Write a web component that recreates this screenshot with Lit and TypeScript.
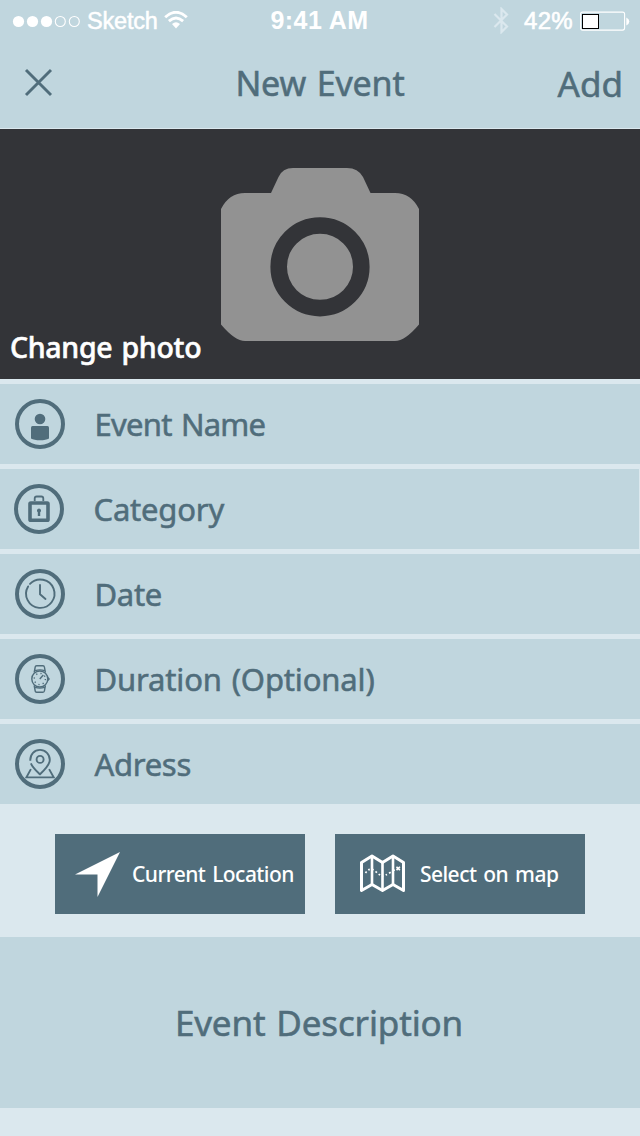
import { LitElement, html, css, svg } from "lit";
import { customElement } from "lit/decorators.js";

const fieldIcons = {
  person: svg`
    <circle cx="25" cy="20" r="5.3" fill="currentColor"/>
    <path d="M16 28.500q0-1.500 1.500-1.500h15q1.500 0 1.500 1.500V39.500q-3 1.800-9 1.800T16 39.500z" fill="currentColor"/>`,
  lock: svg`
    <path d="M20.700 17v-2.500q0-2 2-2h4.600q2 0 2 2V17" fill="none" stroke="currentColor" stroke-width="1.800"/>
    <rect x="16" y="19" width="18" height="17.200" rx=".8" fill="none" stroke="currentColor" stroke-width="3.600"/>
    <path d="M25 24.500a2.100 2.100 0 0 1 1.200 3.800V32h-2.400v-3.700A2.100 2.100 0 0 1 25 24.500z" fill="currentColor"/>`,
  clock: svg`
    <path d="M13.100 17.400A14.200 14.200 0 1 0 15 14.900" fill="none" stroke="currentColor" stroke-width="1.900" stroke-linecap="round"/>
    <path d="M25 16v9.300l5.500 4.700" fill="none" stroke="currentColor" stroke-width="1.900" stroke-linecap="round" stroke-linejoin="round"/>`,
  watch: svg`
    <g fill="none" stroke="currentColor" stroke-width="1.400">
      <circle cx="24.800" cy="25" r="8"/>
      <path d="M19.200 18.500l1-5.500q.2-1.200 1.400-1.200h6.400q1.200 0 1.400 1.200l1 5.500M19.200 31.500l1 5.500q.2 1.200 1.400 1.200h6.400q1.200 0 1.400-1.200l1-5.500M20 16.600q5-1.400 9.600 0M20 33.400q5 1.400 9.600 0"/>
      <path d="M24.800 25l3.500-4"/>
      <circle cx="24.800" cy="25" r="5.600" stroke-dasharray="1.200 3.200"/>
    </g>
    <path d="M33 22.800l2 2.200-2 2.200z" fill="currentColor"/>`,
  pin: svg`
    <g fill="none" stroke="currentColor" stroke-width="1.900">
      <path d="M15.300 21.800C15 15 19.500 10.900 25 10.900S34.800 15.300 34.800 21C34.800 26 29 31.500 25 35.300C21 31.500 17.500 28.500 15.900 24.300"/>
      <circle cx="25.100" cy="20.400" r="3.500"/>
      <path d="M15.900 30.100l-4.500 8.300h27.300l-4.600-8.300"/>
    </g>`,
};

const fields: { label: string; icon: keyof typeof fieldIcons; cls: string }[] = [
  { label: "Event Name", icon: "person", cls: "name" },
  { label: "Category", icon: "lock", cls: "category" },
  { label: "Date", icon: "clock", cls: "date" },
  { label: "Duration (Optional)", icon: "watch", cls: "duration" },
  { label: "Adress", icon: "pin", cls: "adress" },
];

@customElement("status-bar")
class StatusBar extends LitElement {
  static styles = css`
    :host { display: grid; grid-template-columns: 1fr auto 1fr; height: 40px; align-items: center;
      color: #fff; font: 24px/40px "Liberation Sans", sans-serif; white-space: nowrap; -webkit-text-stroke: 0; }
    .side { display: flex; align-items: center; height: 40px; }
    .left { padding-left: 12px; }
    .right { justify-content: flex-end; padding-right: 10px; }
    .carrier { margin: 1px 0 0 6px; font-size: 23.5px; letter-spacing: -0.2px; -webkit-text-stroke: 0.5px #fff; }
    .wifi { margin: 0 0 2px 6px; }
    .time { font-weight: bold; margin: 0 1px 1px 0; font-size: 25px; letter-spacing: 0.45px; }
    .percent { margin: 1px 7px 0 14px; letter-spacing: 0.3px; -webkit-text-stroke: 0.6px #fff; }
    svg { display: block; flex: none; }
  `;
  render() {
    return html`
      <div class="side left">
        <svg width="69" height="14" viewBox="0 0 69 14">
          ${[0, 1, 2].map((i) => svg`<circle cx=${6.5 + i * 14} cy="7.500" r="5.600" fill="#fff"/>`)}
          ${[3, 4].map((i) => svg`<circle cx=${6.3 + i * 14} cy="7.500" r="5" fill="none" stroke="#fff" stroke-width="1.100"/>`)}
        </svg>
        <span class="carrier">Sketch</span>
        <svg class="wifi" width="24" height="18" viewBox="0 0 24 18">
          <path d="M1.200 6.200Q12-3.600 22.800 6.200M4.900 10.200Q12 4 19.100 10.200" fill="none" stroke="#fff" stroke-width="2.900"/>
          <path d="M8 13Q12 9.600 16 13L12 17.500z" fill="#fff"/>
        </svg>
      </div>
      <span class="time">9:41 AM</span>
      <div class="side right">
        <svg width="17" height="27" viewBox="0 0 17 27">
          <path d="M1.500 7L14 19.500 8.500 25V2L14 7.500 1.500 20" fill="none" stroke="#dbe8ee" stroke-width="2.200"/>
        </svg>
        <span class="percent">42%</span>
        <svg width="50" height="20" viewBox="0 0 50 20">
          <rect x=".6" y="1.100" width="44" height="18" rx="2" fill="none" stroke="#fff" stroke-width="1.100"/>
          <rect x="2.500" y="3.500" width="16" height="14" fill="#fff" stroke="#000"/>
          <path d="M46.300 6.500q3 1.500 3 4t-3 4z" fill="#fff"/>
        </svg>
      </div>`;
  }
}

@customElement("app-root")
class AppRoot extends LitElement {
  static styles = css`
    :host { display: flex; flex-direction: column; width: 640px; height: 1136px; background: #dbe8ee;
      color: #506d7b; font-family: "Noto Sans", "Open Sans", sans-serif; font-weight: 400; white-space: nowrap; overflow: hidden;
      word-spacing: 2px; -webkit-text-stroke: 0.55px currentColor; }
    svg { display: block; flex: none; }
    header { background: #c0d6de; height: 128px; flex: none; }
    status-bar { word-spacing: 0; }
    nav { display: grid; grid-template-columns: 1fr auto 1fr; height: 88px; font-size: 34px; line-height: 86px; }
    .close { margin: 28px 0 0 24px; }
    .title { letter-spacing: -0.15px; }
    .add { text-align: right; padding-right: 17px; font-size: 35px; line-height: 88px; }
    .photo { display: flex; flex-direction: column; align-items: center; height: 250px; margin: 1px 0 5px; background: #333438; flex: none; }
    .camera { margin-top: 39px; }
    .change { align-self: flex-start; margin-left: 10px; color: #fff; font-size: 28.5px; line-height: 42px; font-weight: 500; margin-top: -15px; letter-spacing: -0.3px; }
    .fields { display: flex; flex-direction: column; gap: 5px; }
    .field { display: flex; align-items: center; gap: 29.5px; height: 80px; padding-left: 15px; background: #c0d6de; font-size: 31px; line-height: 81px; }
    .label { letter-spacing: -0.3px; }
    .category { padding-left: 14px; margin-right: 1px; }
    .category .label { letter-spacing: -0.2px; }
    .name .label { letter-spacing: -0.75px; }
    .duration .label { letter-spacing: -0.15px; }
    .buttons { display: flex; justify-content: center; gap: 30px; margin: 30px 0 23px; }
    .button { display: flex; align-items: center; width: 250px; height: 80px; background: #506d7b; color: #fff; font-size: 21px; line-height: 82px; letter-spacing: -0.55px; font-weight: 500; -webkit-text-stroke: 0; }
    .arrow { margin: 0 12px 0 20px; }
    .map { margin: 0 14px 0 24px; }
    .description { height: 171px; background: #c0d6de; text-align: center; font-size: 35px; line-height: 171px; letter-spacing: -0.15px; }
    .description span { margin-right: 2px; }
  `;
  render() {
    return html`
      <header>
        <status-bar></status-bar>
        <nav>
          <svg class="close" width="29" height="29" viewBox="0 0 29 29">
            <path d="M2 2L27 27M27 2L2 27" stroke="#506d7b" stroke-width="2.900"/>
          </svg>
          <span class="title">New Event</span>
          <span class="add">Add</span>
        </nav>
      </header>
      <section class="photo">
        <svg class="camera" width="198" height="173" viewBox="0 0 198 173">
          <path d="M0 41Q8 25 24 25H50L57.500 9Q61.500 0 72 0H126Q137 0 142 9L149.500 25H174Q190 25 198 41V156.500Q184 173 174 173H24Q14 173 0 156.500z" fill="#929292"/>
          <circle cx="99" cy="98.800" r="41.300" fill="none" stroke="#333438" stroke-width="16.600"/>
        </svg>
        <span class="change">Change photo</span>
      </section>
      <section class="fields">
        ${fields.map((f) => html`
          <div class="field ${f.cls}">
            <svg width="50" height="50" viewBox="0 0 50 50">
              <circle cx="25" cy="25" r="23" fill="none" stroke="currentColor" stroke-width="4"/>
              ${fieldIcons[f.icon]}
            </svg>
            <span class="label">${f.label}</span>
          </div>`)}
      </section>
      <section class="buttons">
        <div class="button">
          <svg class="arrow" width="45" height="45" viewBox="0 0 45 45">
            <path d="M45 0L22.500 45V22.500H0z" fill="#fff"/>
          </svg>
          <span class="current">Current Location</span>
        </div>
        <div class="button">
          <svg class="map" width="47" height="40" viewBox="0 0 47 40">
            <g fill="none" stroke="#fff">
              <path d="M2.500 8.500L13 2L23.500 8.500L34 2L44.500 8.500V36.500L34 30.500L23.500 36.500L13 30.500L2.500 36.500z" stroke-width="3" stroke-linejoin="round"/>
              <path d="M13 2V30M23.500 8V36M34 2V30" stroke-width="2.600"/>
              <path d="M6.500 19Q11 12.500 16 17T23 22T32 18T38 14.500" stroke-width="1.700" stroke-dasharray="1.700 2.300"/>
              <path d="M37.500 12.700l3.400 3.400m0-3.400l-3.400 3.400" stroke-width="1.600"/>
            </g>
          </svg>
          <span class="select">Select on map</span>
        </div>
      </section>
      <section class="description"><span>Event Description</span></section>`;
  }
}
